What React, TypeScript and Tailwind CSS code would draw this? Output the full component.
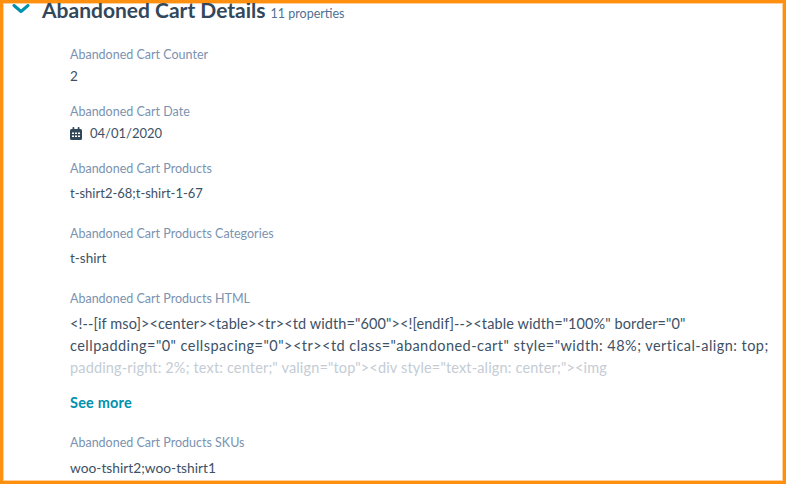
const font = "font-['Lato','Open_Sans',sans-serif]"

function Label({ children }: { children: React.ReactNode }) {
  return <div className="h-[18px] text-[12.5px] leading-[18px] text-[#7a93b0]">{children}</div>
}

function CalendarIcon() {
  return (
    <svg width="12" height="13" viewBox="0 0 12 13" className="mr-2 mt-[1px]">
      <path d="M1.5 2h9A1.5 1.5 0 0 1 12 3.500v8A1.500 1.500 0 0 1 10.500 13h-9A1.500 1.500 0 0 1 0 11.500v-8A1.500 1.500 0 0 1 1.500 2z" fill="#33475b" />
      <rect x="2.500" y="0" width="1.800" height="3" rx="0.800" fill="#33475b" />
      <rect x="7.700" y="0" width="1.800" height="3" rx="0.800" fill="#33475b" />
      <g fill="#ffffff">
        <rect x="2" y="5.500" width="2" height="1.500" />
        <rect x="5" y="5.500" width="2" height="1.500" />
        <rect x="8" y="5.500" width="2" height="1.500" />
        <rect x="2" y="8.500" width="2" height="1.500" />
        <rect x="5" y="8.500" width="2" height="1.500" />
        <rect x="8" y="8.500" width="2" height="1.500" />
      </g>
    </svg>
  )
}

export default function App() {
  return (
    <div className={`${font} h-[484px] w-[786px] overflow-hidden border-[3px] border-[#ff8f0f] bg-white text-[#3d5166] shadow-[inset_0_0_0_1px_#ffd09a]`}>
      {/* Section header */}
      <div className="flex h-[18px] items-center pl-[9px]">
        <svg width="18" height="10" viewBox="0 0 18 10" className="mt-[-6px]">
          <path d="M2 1.500 L9 7.500 L16 1.500" fill="none" stroke="#0091ae" strokeWidth="3" strokeLinecap="round" strokeLinejoin="round" />
        </svg>
        <div className="ml-[12px] flex items-baseline">
          <span className="text-[21px] font-bold leading-[18px] text-[#33475b]">Abandoned Cart Details</span>
          <span className="ml-[5px] text-[12.5px] leading-[18px] text-[#516f90]">11 properties</span>
        </div>
      </div>

      {/* Properties */}
      <div className="pl-[67px] pt-[25px]">
        <Label>Abandoned Cart Counter</Label>
        <div className="mt-[1px] h-[22px] text-[13.5px] leading-[22px]">2</div>

        <div className="mt-[16px]">
          <Label>Abandoned Cart Date</Label>
        </div>
        <div className="mt-[1px] flex h-[22px] items-center text-[13px] leading-[22px]">
          <CalendarIcon />
          04/01/2020
        </div>

        <div className="mt-[16px]">
          <Label>Abandoned Cart Products</Label>
        </div>
        <div className="mt-[4px] h-[22px] text-[13px] leading-[22px]">t-shirt2-68;t-shirt-1-67</div>

        <div className="mt-[21px]">
          <Label>Abandoned Cart Products Categories</Label>
        </div>
        <div className="mt-[4px] h-[22px] text-[13.5px] leading-[22px]">t-shirt</div>

        <div className="mt-[21px]">
          <Label>Abandoned Cart Products HTML</Label>
        </div>
        <div className="mt-[5px] w-[710px] whitespace-nowrap text-[14.5px] leading-[22px]">
          <div className="tracking-[0.09px]">{'<!--[if mso]><center><table><tr><td width="600"><![endif]--><table width="100%" border="0"'}</div>
          <div className="tracking-[0.46px]">{'cellpadding="0" cellspacing="0"><tr><td class="abandoned-cart" style="width: 48%; vertical-align: top;'}</div>
          <div className="tracking-[0.16px] text-[#c4ccd5]">{'padding-right: 2%; text: center;" valign="top"><div style="text-align: center;"><img'}</div>
        </div>

        <div className="mt-[13px] h-[22px] text-[14.5px] font-bold leading-[22px] tracking-[0.2px] text-[#0091ae]">See more</div>

        <div className="mt-[20px]">
          <Label>Abandoned Cart Products SKUs</Label>
        </div>
        <div className="mt-[5px] h-[22px] text-[13.75px] leading-[22px]">woo-tshirt2;woo-tshirt1</div>
      </div>
    </div>
  )
}
